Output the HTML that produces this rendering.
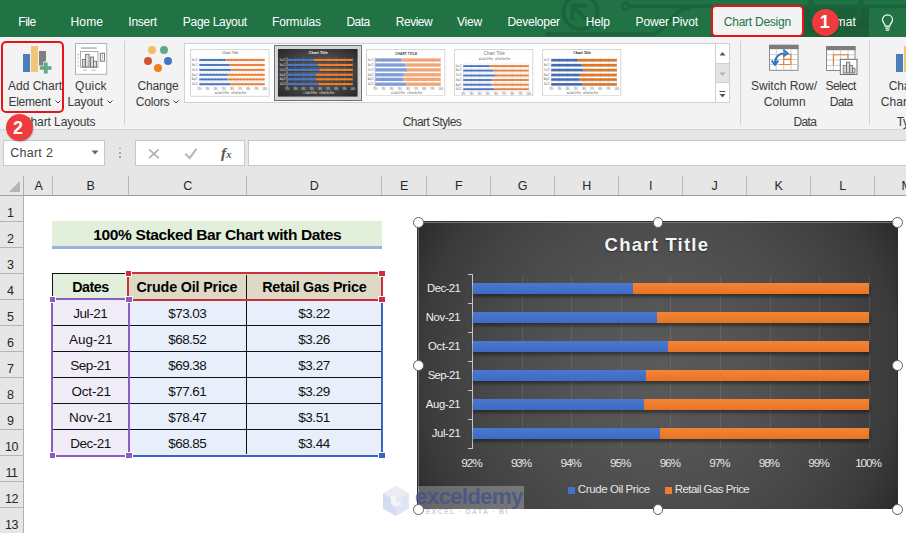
<!DOCTYPE html>
<html><head><meta charset="utf-8"><title>Excel</title>
<style>
html,body{margin:0;padding:0;}
body{width:906px;height:533px;position:relative;overflow:hidden;background:#fff;font-family:"Liberation Sans",sans-serif;}
.r{position:absolute;display:block;}
.t{position:absolute;white-space:nowrap;display:block;}
</style></head><body>
<div class="r" style="left:0px;top:0px;width:906px;height:37px;background:#217346;"></div>
<div class="r" style="left:711px;top:7px;width:158px;height:30px;background:#1b5e38;"></div>
<svg class="r" style="left:540px;top:0" width="366" height="37" viewBox="540 0 366 37" fill="none" stroke="#1a653c" stroke-width="3.800">
<circle cx="580.500" cy="12" r="17"/><path d="M572.500 20V5.500H587M573 6L590 23" stroke-width="4.200"/>
<path d="M545 34H650Q658 34 663 28L678 12Q682 8 690 8"/><circle cx="625.500" cy="6.400" r="3.300" stroke-width="3"/><path d="M629 6.400H906"/>
<circle cx="836" cy="2" r="25" stroke-width="5"/><path d="M804 24.500H869" stroke="#185a34" stroke-width="3.500"/>
</svg>
<span class="t" style="left:18.27px;top:14.14px;font-size:12px;line-height:16px;letter-spacing:-0.459px;color:#ffffff;">File</span>
<span class="t" style="left:70.56px;top:14.14px;font-size:12px;line-height:16px;letter-spacing:0.123px;color:#ffffff;">Home</span>
<span class="t" style="left:128.37px;top:14.14px;font-size:12px;line-height:16px;letter-spacing:-0.252px;color:#ffffff;">Insert</span>
<span class="t" style="left:182.85px;top:14.14px;font-size:12px;line-height:16px;letter-spacing:-0.308px;color:#ffffff;">Page Layout</span>
<span class="t" style="left:271.94px;top:14.14px;font-size:12px;line-height:16px;letter-spacing:-0.126px;color:#ffffff;">Formulas</span>
<span class="t" style="left:346.44px;top:14.14px;font-size:12px;line-height:16px;letter-spacing:-0.512px;color:#ffffff;">Data</span>
<span class="t" style="left:395.76px;top:14.14px;font-size:12px;line-height:16px;letter-spacing:-0.474px;color:#ffffff;">Review</span>
<span class="t" style="left:456.90px;top:14.14px;font-size:12px;line-height:16px;letter-spacing:-0.198px;color:#ffffff;">View</span>
<span class="t" style="left:507.38px;top:14.14px;font-size:12px;line-height:16px;letter-spacing:-0.244px;color:#ffffff;">Developer</span>
<span class="t" style="left:585.65px;top:14.14px;font-size:12px;line-height:16px;letter-spacing:-0.095px;color:#ffffff;">Help</span>
<span class="t" style="left:635.62px;top:14.14px;font-size:12px;line-height:16px;letter-spacing:-0.157px;color:#ffffff;">Power Pivot</span>
<div class="r" style="left:710.5px;top:5px;width:93.5px;height:31.5px;background:#f3f3f3;border:2px solid #e8141c;border-radius:5px;box-sizing:border-box;"></div>
<span class="t" style="left:723.87px;top:14.14px;font-size:12px;line-height:16px;letter-spacing:-0.252px;color:#217346;">Chart Design</span>
<span class="t" style="left:817.08px;top:14.14px;font-size:12px;line-height:16px;letter-spacing:0.166px;color:#ffffff;">Format</span>
<div class="r" style="left:812.400px;top:8.700px;width:27px;height:27px;box-shadow:0.5px 1px 1.5px rgba(0,0,0,.25);border-radius:50%;background:#ee3b3e;"></div>
<span class="t" style="left:819.74px;top:11.41px;font-size:18px;line-height:22px;letter-spacing:-2.511px;color:#ffffff;font-weight:bold;">1</span>
<svg class="r" style="left:881px;top:13.500px" width="13" height="17" viewBox="0 0 16 21" fill="none" stroke="#fff" stroke-width="1.500"><path d="M8 1.200C4.300 1.200 1.800 3.900 1.800 7.100C1.800 9.700 3.700 11 4.600 12.800L5.100 15H10.900L11.400 12.800C12.300 11 14.200 9.700 14.200 7.100C14.200 3.900 11.700 1.200 8 1.200Z"/><path d="M5.300 17.400H10.700M5.800 19.800H10.200"/></svg>
<div class="r" style="left:0px;top:37px;width:906px;height:93px;background:#f3f3f3;"></div>
<div class="r" style="left:0px;top:129px;width:906px;height:1px;background:#d4d4d4;"></div>
<div class="r" style="left:124px;top:41px;width:1px;height:84px;background:#d2d2d2;"></div>
<div class="r" style="left:740px;top:41px;width:1px;height:84px;background:#d2d2d2;"></div>
<div class="r" style="left:869px;top:41px;width:1px;height:84px;background:#d2d2d2;"></div>
<div class="r" style="left:0.7px;top:41.3px;width:63.5px;height:71.7px;background:transparent;border:2px solid #e8141c;border-radius:5px;box-sizing:border-box;"></div>
<div class="r" style="left:22.9px;top:54.2px;width:7.1px;height:17.5px;background:#4a7ebb;"></div>
<div class="r" style="left:31px;top:46.2px;width:6.9px;height:25.5px;background:#f0c577;"></div>
<div class="r" style="left:39.3px;top:51.2px;width:6.4px;height:14.5px;background:#7f7f7f;"></div>
<svg class="r" style="left:38px;top:61.4px" width="14" height="14" viewBox="0 0 14 14"><path d="M5.3 0.6h4.800v3.900h3.900v4.400h-3.900v4.400h-4.800v-4.400h-4.600v-4.400h4.600z" fill="#f3f3f3"/><path d="M5.800 1.400h3.900v3.800h3.800v3.500h-3.800v3.900h-3.900v-3.900h-3.900v-3.500h3.900z" fill="#5fa88a"/></svg>
<span class="t" style="left:8.00px;top:78.14px;font-size:12px;line-height:16px;letter-spacing:-0.003px;color:#3a3a3a;">Add Chart</span>
<span class="t" style="left:8.39px;top:94.14px;font-size:12px;line-height:16px;letter-spacing:-0.217px;color:#3a3a3a;">Element</span>
<svg class="r" style="left:54.7px;top:100.2px" width="6" height="4" viewBox="0 0 6 4"><path d="M0.5 0.5 L3 3 L5.5 0.5" fill="none" stroke="#444" stroke-width="1"/></svg>
<svg class="r" style="left:107.2px;top:100.2px" width="6" height="4" viewBox="0 0 6 4"><path d="M0.5 0.5 L3 3 L5.5 0.5" fill="none" stroke="#444" stroke-width="1"/></svg>
<svg class="r" style="left:173.2px;top:100.2px" width="6" height="4" viewBox="0 0 6 4"><path d="M0.5 0.5 L3 3 L5.5 0.5" fill="none" stroke="#444" stroke-width="1"/></svg>
<svg class="r" style="left:75px;top:43px" width="33" height="32" viewBox="75 43 33 32"><rect x="75.5" y="43.500" width="31.200" height="30.800" fill="#fff" stroke="#b2b2b2"/>
<rect x="81" y="47.400" width="15.700" height="1.300" fill="#a6a6a6"/><rect x="80.500" y="51.500" width="17.500" height="15.700" fill="#fff" stroke="#9a9a9a" stroke-width="0.8"/>
<g fill="#dcdcdc" stroke="#666" stroke-width="0.8"><rect x="82.300" y="59.500" width="2.900" height="7.500"/><rect x="85.600" y="54.300" width="3.500" height="12.700"/><rect x="90.400" y="57" width="3.200" height="10"/><rect x="93.600" y="61.200" width="3" height="5.800"/></g>
<rect x="100.300" y="53.200" width="4.100" height="8" fill="#fff" stroke="#666" stroke-width="0.9"/><path d="M102.350 54.800v1M102.350 56.700v1M102.350 58.600v1" stroke="#666" stroke-width="1"/>
<path d="M77.200 54.500h1.800M77.200 58.300h1.800M77.200 62h1.800M77.200 65.800h1.800" stroke="#aaa" stroke-width="0.8"/><path d="M83.200 70.200h3.800M91.500 70.200h3.800" stroke="#aaa" stroke-width="0.9"/></svg>
<span class="t" style="left:75.10px;top:78.14px;font-size:12px;line-height:16px;letter-spacing:0.205px;color:#3a3a3a;">Quick</span>
<span class="t" style="left:67.46px;top:94.14px;font-size:12px;line-height:16px;letter-spacing:-0.088px;color:#3a3a3a;">Layout</span>
<div class="r" style="left:148px;top:46px;width:8px;height:8px;border-radius:50%;background:#f0c060"></div>
<div class="r" style="left:160px;top:46px;width:8px;height:8px;border-radius:50%;background:#5fa88a"></div>
<div class="r" style="left:144px;top:57px;width:8px;height:8px;border-radius:50%;background:#d4532f"></div>
<div class="r" style="left:164px;top:57px;width:8px;height:8px;border-radius:50%;background:#3d78c2"></div>
<div class="r" style="left:154px;top:63.5px;width:8px;height:8px;border-radius:50%;background:#f08020"></div>
<span class="t" style="left:137.43px;top:78.14px;font-size:12px;line-height:16px;letter-spacing:-0.139px;color:#3a3a3a;">Change</span>
<span class="t" style="left:135.63px;top:94.14px;font-size:12px;line-height:16px;letter-spacing:-0.146px;color:#3a3a3a;">Colors</span>
<span class="t" style="left:21.95px;top:113.64px;font-size:12px;line-height:16px;letter-spacing:-0.093px;color:#3a3a3a;">Chart Layouts</span>
<span class="t" style="left:402.71px;top:113.64px;font-size:12px;line-height:16px;letter-spacing:-0.571px;color:#3a3a3a;">Chart Styles</span>
<span class="t" style="left:751.00px;top:78.14px;font-size:12px;line-height:16px;letter-spacing:-0.002px;color:#3a3a3a;">Switch Row/</span>
<span class="t" style="left:763.75px;top:94.14px;font-size:12px;line-height:16px;letter-spacing:0.109px;color:#3a3a3a;">Column</span>
<span class="t" style="left:825.45px;top:78.14px;font-size:12px;line-height:16px;letter-spacing:-0.509px;color:#3a3a3a;">Select</span>
<span class="t" style="left:829.71px;top:94.14px;font-size:12px;line-height:16px;letter-spacing:-0.587px;color:#3a3a3a;">Data</span>
<span class="t" style="left:793.41px;top:113.64px;font-size:12px;line-height:16px;letter-spacing:-0.587px;color:#3a3a3a;">Data</span>
<span class="t" style="left:888.64px;top:78.14px;font-size:12px;line-height:16px;letter-spacing:-0.122px;color:#3a3a3a;">Change</span>
<span class="t" style="left:880.74px;top:94.14px;font-size:12px;line-height:16px;letter-spacing:0.082px;color:#3a3a3a;">Chart Type</span>
<span class="t" style="left:896.75px;top:113.64px;font-size:12px;line-height:16px;letter-spacing:-0.504px;color:#3a3a3a;">Type</span>
<div class="r" style="left:896.3px;top:54px;width:6.9px;height:17.8px;background:#4a7ebb;"></div>
<div class="r" style="left:904px;top:45.7px;width:4px;height:26px;background:#f0c577;"></div>
<svg class="r" style="left:768px;top:44px" width="32" height="28" viewBox="768 44 32 28"><rect x="769.500" y="45.300" width="28.500" height="25" fill="#fff" stroke="#8a8a8a"/><rect x="769" y="44.800" width="29.500" height="4.400" fill="#7d7d7d"/>
<path d="M770 54.500h28M770 59.500h28M770 64.500h28M776.300 49v21M783.700 49v21M791 49v21" stroke="#c8c8c8" stroke-width="0.9"/>
<path d="M779.300 64.500h11.600v-10.200h-7.200v10.200M783.700 59.400h7.200" stroke="#ed7d31" stroke-width="1.100" fill="none"/>
<path d="M775 63.500C775 57 779 53.200 785.500 53.200" stroke="#2f75c5" stroke-width="2.100" fill="none"/><path d="M783.300 49.800L787.600 53.200L783.300 56.600" stroke="#2f75c5" stroke-width="1.900" fill="none"/><path d="M771.600 60.600L775 65L778.400 60.600" stroke="#2f75c5" stroke-width="1.900" fill="none"/></svg>
<svg class="r" style="left:825px;top:44px" width="34" height="32" viewBox="825 44 34 32"><rect x="826.500" y="46.500" width="28.500" height="24" fill="#fff" stroke="#8a8a8a"/><rect x="826" y="46" width="29.500" height="4.200" fill="#7d7d7d"/>
<path d="M827 54.800h28M827 60h28M827 65.500h28M833.400 50v20M840.600 50v20M848 50v20" stroke="#c8c8c8" stroke-width="0.9"/>
<path d="M833.400 65.500v-10.700h14.600v4" stroke="#ed7d31" stroke-width="1.100" fill="none"/>
<rect x="840.300" y="59.300" width="16.700" height="15.200" fill="#fff" stroke="#6e6e6e" stroke-width="1"/>
<g fill="#d6d6d6" stroke="#666" stroke-width="0.8"><rect x="843.200" y="65.500" width="3.200" height="7.500"/><rect x="846.400" y="62.200" width="3.400" height="10.800"/><rect x="849.800" y="65.500" width="2.800" height="7.500"/><rect x="852.600" y="68.200" width="2.400" height="4.800"/></g></svg>
<div class="r" style="left:184px;top:43px;width:546px;height:60px;background:#ffffff;border:1px solid #d0d0d0;box-sizing:border-box;"></div>
<div class="r" style="left:715px;top:43px;width:15px;height:60px;background:#ffffff;border:1px solid #d0d0d0;box-sizing:border-box;"></div>
<div class="r" style="left:716px;top:63px;width:13px;height:20px;background:#e4e4e4;border-top:1px solid #d0d0d0;border-bottom:1px solid #d0d0d0;box-sizing:border-box;"></div>
<svg class="r" style="left:715px;top:43px" width="15" height="60" viewBox="0 0 15 60"><path d="M4.500 12.500l3-3.500l3 3.500z" fill="#555"/><path d="M4.500 29.500l3 3.500l3-3.500z" fill="#b0b0b0"/><path d="M4.500 48.500h6" stroke="#555"/><path d="M4.500 51l3 3.500l3-3.500z" fill="#555"/></svg>
<svg class="r" style="left:190.3px;top:48.8px" width="79.6" height="47.8" viewBox="0 0 79.6 47.8" font-family="Liberation Sans, sans-serif"><rect x="0.5" y="0.5" width="78.6" height="46.8" fill="#fff" stroke="#d6d6d6"/><defs><pattern id="hz" width="3.2" height="3.2" patternUnits="userSpaceOnUse"><path d="M-0.8 -0.8L4 4M-0.8 2.4L0.8 4M2.4 -0.8L4 0.8" stroke="#b4b4b4" stroke-width="0.5"/></pattern></defs><text x="40.199999999999996" y="4.90" font-size="3.6" text-anchor="middle" fill="#444" >Chart Title</text><rect x="9.3" y="8.55" width="65.4" height="29.100000000000005" fill="url(#hz)"/><rect x="9.3" y="10.05" width="26.49" height="1.9" fill="#4472c4"/><rect x="35.79" y="10.05" width="38.91" height="1.9" fill="#ed7d31"/><text x="7.6" y="11.90" font-size="2.8" text-anchor="end" textLength="5.8" lengthAdjust="spacingAndGlyphs" fill="#4a4a4a">Dec-21</text><rect x="9.3" y="15.05" width="30.41" height="1.9" fill="#4472c4"/><rect x="39.71" y="15.05" width="34.99" height="1.9" fill="#ed7d31"/><text x="7.6" y="16.90" font-size="2.8" text-anchor="end" textLength="5.8" lengthAdjust="spacingAndGlyphs" fill="#4a4a4a">Nov-21</text><rect x="9.3" y="19.95" width="32.18" height="1.9" fill="#4472c4"/><rect x="41.48" y="19.95" width="33.22" height="1.9" fill="#ed7d31"/><text x="7.6" y="21.80" font-size="2.8" text-anchor="end" textLength="5.8" lengthAdjust="spacingAndGlyphs" fill="#4a4a4a">Oct-21</text><rect x="9.3" y="24.85" width="28.58" height="1.9" fill="#4472c4"/><rect x="37.88" y="24.85" width="36.82" height="1.9" fill="#ed7d31"/><text x="7.6" y="26.70" font-size="2.8" text-anchor="end" textLength="5.8" lengthAdjust="spacingAndGlyphs" fill="#4a4a4a">Sep-21</text><rect x="9.3" y="29.45" width="28.25" height="1.9" fill="#4472c4"/><rect x="37.55" y="29.45" width="37.15" height="1.9" fill="#ed7d31"/><text x="7.6" y="31.30" font-size="2.8" text-anchor="end" textLength="5.8" lengthAdjust="spacingAndGlyphs" fill="#4a4a4a">Aug-21</text><rect x="9.3" y="34.25" width="30.87" height="1.9" fill="#4472c4"/><rect x="40.17" y="34.25" width="34.53" height="1.9" fill="#ed7d31"/><text x="7.6" y="36.10" font-size="2.8" text-anchor="end" textLength="5.8" lengthAdjust="spacingAndGlyphs" fill="#4a4a4a">Jul-21</text><text x="9.30" y="40.85" font-size="2.7" text-anchor="middle" textLength="3.6" lengthAdjust="spacingAndGlyphs" fill="#4a4a4a">92%</text><text x="17.48" y="40.85" font-size="2.7" text-anchor="middle" textLength="3.6" lengthAdjust="spacingAndGlyphs" fill="#4a4a4a">93%</text><text x="25.65" y="40.85" font-size="2.7" text-anchor="middle" textLength="3.6" lengthAdjust="spacingAndGlyphs" fill="#4a4a4a">94%</text><text x="33.83" y="40.85" font-size="2.7" text-anchor="middle" textLength="3.6" lengthAdjust="spacingAndGlyphs" fill="#4a4a4a">95%</text><text x="42.00" y="40.85" font-size="2.7" text-anchor="middle" textLength="3.6" lengthAdjust="spacingAndGlyphs" fill="#4a4a4a">96%</text><text x="50.17" y="40.85" font-size="2.7" text-anchor="middle" textLength="3.6" lengthAdjust="spacingAndGlyphs" fill="#4a4a4a">97%</text><text x="58.35" y="40.85" font-size="2.7" text-anchor="middle" textLength="3.6" lengthAdjust="spacingAndGlyphs" fill="#4a4a4a">98%</text><text x="66.53" y="40.85" font-size="2.7" text-anchor="middle" textLength="3.6" lengthAdjust="spacingAndGlyphs" fill="#4a4a4a">99%</text><text x="74.70" y="40.85" font-size="2.7" text-anchor="middle" textLength="4.6" lengthAdjust="spacingAndGlyphs" fill="#4a4a4a">100%</text><rect x="25.2" y="43.4" width="1.4" height="1.4" fill="#4472c4"/><text x="27" y="44.95" font-size="2.7" textLength="12" lengthAdjust="spacingAndGlyphs" fill="#4a4a4a">Crude Oil Price</text><rect x="41.3" y="43.4" width="1.4" height="1.4" fill="#ed7d31"/><text x="43.1" y="44.95" font-size="2.7" textLength="13" lengthAdjust="spacingAndGlyphs" fill="#4a4a4a">Retail Gas Price</text></svg>
<div class="r" style="left:274px;top:45px;width:88px;height:56px;background:#d2d2d2;border:1px solid #6e6e6e;box-sizing:border-box;"></div>
<div class="r" style="left:275px;top:46px;width:86px;height:54px;background:transparent;border:1px solid #dcdcdc;box-sizing:border-box;"></div>
<svg class="r" style="left:278.2px;top:49.2px" width="79.6" height="47.6" viewBox="0 0 79.6 47.6" font-family="Liberation Sans, sans-serif"><defs><radialGradient id="tg" cx="50%" cy="50%" r="65%"><stop offset="0" stop-color="#5a5a5a"/><stop offset=".6" stop-color="#474747"/><stop offset="1" stop-color="#2b2b2b"/></radialGradient></defs><rect width="79.6" height="47.6" fill="url(#tg)"/><text x="40.3" y="5.00" font-size="3.9" text-anchor="middle" fill="#f4f4f4" font-weight="bold">Chart Title</text><path d="M9.30 8.55V37.650000000000006" stroke="#777" stroke-width="0.4"/><path d="M17.48 8.55V37.650000000000006" stroke="#777" stroke-width="0.4"/><path d="M25.65 8.55V37.650000000000006" stroke="#777" stroke-width="0.4"/><path d="M33.83 8.55V37.650000000000006" stroke="#777" stroke-width="0.4"/><path d="M42.00 8.55V37.650000000000006" stroke="#777" stroke-width="0.4"/><path d="M50.17 8.55V37.650000000000006" stroke="#777" stroke-width="0.4"/><path d="M58.35 8.55V37.650000000000006" stroke="#777" stroke-width="0.4"/><path d="M66.53 8.55V37.650000000000006" stroke="#777" stroke-width="0.4"/><path d="M74.70 8.55V37.650000000000006" stroke="#777" stroke-width="0.4"/><path d="M9.0 8.55V37.650000000000006" stroke="#ddd" stroke-width="0.5"/><rect x="9.3" y="10.60" width="65.4" height="2.2" fill="#000" opacity=".3"/><rect x="9.3" y="9.90" width="26.49" height="2.2" fill="#4a78cf"/><rect x="35.79" y="9.90" width="38.91" height="2.2" fill="#f07f2e"/><text x="7.6" y="11.90" font-size="2.8" text-anchor="end" textLength="5.8" lengthAdjust="spacingAndGlyphs" fill="#f0f0f0">Dec-21</text><rect x="9.3" y="15.60" width="65.4" height="2.2" fill="#000" opacity=".3"/><rect x="9.3" y="14.90" width="30.41" height="2.2" fill="#4a78cf"/><rect x="39.71" y="14.90" width="34.99" height="2.2" fill="#f07f2e"/><text x="7.6" y="16.90" font-size="2.8" text-anchor="end" textLength="5.8" lengthAdjust="spacingAndGlyphs" fill="#f0f0f0">Nov-21</text><rect x="9.3" y="20.50" width="65.4" height="2.2" fill="#000" opacity=".3"/><rect x="9.3" y="19.80" width="32.18" height="2.2" fill="#4a78cf"/><rect x="41.48" y="19.80" width="33.22" height="2.2" fill="#f07f2e"/><text x="7.6" y="21.80" font-size="2.8" text-anchor="end" textLength="5.8" lengthAdjust="spacingAndGlyphs" fill="#f0f0f0">Oct-21</text><rect x="9.3" y="25.40" width="65.4" height="2.2" fill="#000" opacity=".3"/><rect x="9.3" y="24.70" width="28.58" height="2.2" fill="#4a78cf"/><rect x="37.88" y="24.70" width="36.82" height="2.2" fill="#f07f2e"/><text x="7.6" y="26.70" font-size="2.8" text-anchor="end" textLength="5.8" lengthAdjust="spacingAndGlyphs" fill="#f0f0f0">Sep-21</text><rect x="9.3" y="30.00" width="65.4" height="2.2" fill="#000" opacity=".3"/><rect x="9.3" y="29.30" width="28.25" height="2.2" fill="#4a78cf"/><rect x="37.55" y="29.30" width="37.15" height="2.2" fill="#f07f2e"/><text x="7.6" y="31.30" font-size="2.8" text-anchor="end" textLength="5.8" lengthAdjust="spacingAndGlyphs" fill="#f0f0f0">Aug-21</text><rect x="9.3" y="34.80" width="65.4" height="2.2" fill="#000" opacity=".3"/><rect x="9.3" y="34.10" width="30.87" height="2.2" fill="#4a78cf"/><rect x="40.17" y="34.10" width="34.53" height="2.2" fill="#f07f2e"/><text x="7.6" y="36.10" font-size="2.8" text-anchor="end" textLength="5.8" lengthAdjust="spacingAndGlyphs" fill="#f0f0f0">Jul-21</text><text x="9.30" y="40.85" font-size="2.7" text-anchor="middle" textLength="3.6" lengthAdjust="spacingAndGlyphs" fill="#f0f0f0">92%</text><text x="17.48" y="40.85" font-size="2.7" text-anchor="middle" textLength="3.6" lengthAdjust="spacingAndGlyphs" fill="#f0f0f0">93%</text><text x="25.65" y="40.85" font-size="2.7" text-anchor="middle" textLength="3.6" lengthAdjust="spacingAndGlyphs" fill="#f0f0f0">94%</text><text x="33.83" y="40.85" font-size="2.7" text-anchor="middle" textLength="3.6" lengthAdjust="spacingAndGlyphs" fill="#f0f0f0">95%</text><text x="42.00" y="40.85" font-size="2.7" text-anchor="middle" textLength="3.6" lengthAdjust="spacingAndGlyphs" fill="#f0f0f0">96%</text><text x="50.17" y="40.85" font-size="2.7" text-anchor="middle" textLength="3.6" lengthAdjust="spacingAndGlyphs" fill="#f0f0f0">97%</text><text x="58.35" y="40.85" font-size="2.7" text-anchor="middle" textLength="3.6" lengthAdjust="spacingAndGlyphs" fill="#f0f0f0">98%</text><text x="66.53" y="40.85" font-size="2.7" text-anchor="middle" textLength="3.6" lengthAdjust="spacingAndGlyphs" fill="#f0f0f0">99%</text><text x="74.70" y="40.85" font-size="2.7" text-anchor="middle" textLength="4.6" lengthAdjust="spacingAndGlyphs" fill="#f0f0f0">100%</text><rect x="25.2" y="43.4" width="1.4" height="1.4" fill="#4a78cf"/><text x="27" y="44.95" font-size="2.7" textLength="12" lengthAdjust="spacingAndGlyphs" fill="#f0f0f0">Crude Oil Price</text><rect x="41.3" y="43.4" width="1.4" height="1.4" fill="#f07f2e"/><text x="43.1" y="44.95" font-size="2.7" textLength="13" lengthAdjust="spacingAndGlyphs" fill="#f0f0f0">Retail Gas Price</text></svg>
<svg class="r" style="left:366.3px;top:49.2px" width="79.3" height="47.3" viewBox="0 0 79.3 47.3" font-family="Liberation Sans, sans-serif"><rect x="0.5" y="0.5" width="78.3" height="46.3" fill="#fff" stroke="#d6d6d6"/><text x="40.15" y="5.62" font-size="3.4" text-anchor="middle" fill="#444" font-weight="bold">CHART TITLE</text><path d="M9.30 8.55V37.650000000000006" stroke="#dcdcdc" stroke-width="0.4"/><path d="M17.48 8.55V37.650000000000006" stroke="#dcdcdc" stroke-width="0.4"/><path d="M25.65 8.55V37.650000000000006" stroke="#dcdcdc" stroke-width="0.4"/><path d="M33.83 8.55V37.650000000000006" stroke="#dcdcdc" stroke-width="0.4"/><path d="M42.00 8.55V37.650000000000006" stroke="#dcdcdc" stroke-width="0.4"/><path d="M50.17 8.55V37.650000000000006" stroke="#dcdcdc" stroke-width="0.4"/><path d="M58.35 8.55V37.650000000000006" stroke="#dcdcdc" stroke-width="0.4"/><path d="M66.53 8.55V37.650000000000006" stroke="#dcdcdc" stroke-width="0.4"/><path d="M74.70 8.55V37.650000000000006" stroke="#dcdcdc" stroke-width="0.4"/><path d="M9.0 8.55V37.650000000000006" stroke="#aaa" stroke-width="0.5"/><rect x="9.3" y="9.35" width="26.49" height="3.3" fill="#7f9dd6"/><rect x="35.79" y="9.35" width="38.91" height="3.3" fill="#f2a677"/><text x="7.6" y="11.90" font-size="2.8" text-anchor="end" textLength="5.8" lengthAdjust="spacingAndGlyphs" fill="#4a4a4a">Dec-21</text><rect x="9.3" y="14.35" width="30.41" height="3.3" fill="#7f9dd6"/><rect x="39.71" y="14.35" width="34.99" height="3.3" fill="#f2a677"/><text x="7.6" y="16.90" font-size="2.8" text-anchor="end" textLength="5.8" lengthAdjust="spacingAndGlyphs" fill="#4a4a4a">Nov-21</text><rect x="9.3" y="19.25" width="32.18" height="3.3" fill="#7f9dd6"/><rect x="41.48" y="19.25" width="33.22" height="3.3" fill="#f2a677"/><text x="7.6" y="21.80" font-size="2.8" text-anchor="end" textLength="5.8" lengthAdjust="spacingAndGlyphs" fill="#4a4a4a">Oct-21</text><rect x="9.3" y="24.15" width="28.58" height="3.3" fill="#7f9dd6"/><rect x="37.88" y="24.15" width="36.82" height="3.3" fill="#f2a677"/><text x="7.6" y="26.70" font-size="2.8" text-anchor="end" textLength="5.8" lengthAdjust="spacingAndGlyphs" fill="#4a4a4a">Sep-21</text><rect x="9.3" y="28.75" width="28.25" height="3.3" fill="#7f9dd6"/><rect x="37.55" y="28.75" width="37.15" height="3.3" fill="#f2a677"/><text x="7.6" y="31.30" font-size="2.8" text-anchor="end" textLength="5.8" lengthAdjust="spacingAndGlyphs" fill="#4a4a4a">Aug-21</text><rect x="9.3" y="33.55" width="30.87" height="3.3" fill="#7f9dd6"/><rect x="40.17" y="33.55" width="34.53" height="3.3" fill="#f2a677"/><text x="7.6" y="36.10" font-size="2.8" text-anchor="end" textLength="5.8" lengthAdjust="spacingAndGlyphs" fill="#4a4a4a">Jul-21</text><text x="9.30" y="40.85" font-size="2.7" text-anchor="middle" textLength="3.6" lengthAdjust="spacingAndGlyphs" fill="#4a4a4a">92%</text><text x="17.48" y="40.85" font-size="2.7" text-anchor="middle" textLength="3.6" lengthAdjust="spacingAndGlyphs" fill="#4a4a4a">93%</text><text x="25.65" y="40.85" font-size="2.7" text-anchor="middle" textLength="3.6" lengthAdjust="spacingAndGlyphs" fill="#4a4a4a">94%</text><text x="33.83" y="40.85" font-size="2.7" text-anchor="middle" textLength="3.6" lengthAdjust="spacingAndGlyphs" fill="#4a4a4a">95%</text><text x="42.00" y="40.85" font-size="2.7" text-anchor="middle" textLength="3.6" lengthAdjust="spacingAndGlyphs" fill="#4a4a4a">96%</text><text x="50.17" y="40.85" font-size="2.7" text-anchor="middle" textLength="3.6" lengthAdjust="spacingAndGlyphs" fill="#4a4a4a">97%</text><text x="58.35" y="40.85" font-size="2.7" text-anchor="middle" textLength="3.6" lengthAdjust="spacingAndGlyphs" fill="#4a4a4a">98%</text><text x="66.53" y="40.85" font-size="2.7" text-anchor="middle" textLength="3.6" lengthAdjust="spacingAndGlyphs" fill="#4a4a4a">99%</text><text x="74.70" y="40.85" font-size="2.7" text-anchor="middle" textLength="4.6" lengthAdjust="spacingAndGlyphs" fill="#4a4a4a">100%</text><rect x="25.2" y="43.4" width="1.4" height="1.4" fill="#7f9dd6"/><text x="27" y="44.95" font-size="2.7" textLength="12" lengthAdjust="spacingAndGlyphs" fill="#4a4a4a">Crude Oil Price</text><rect x="41.3" y="43.4" width="1.4" height="1.4" fill="#f2a677"/><text x="43.1" y="44.95" font-size="2.7" textLength="13" lengthAdjust="spacingAndGlyphs" fill="#4a4a4a">Retail Gas Price</text></svg>
<svg class="r" style="left:454.3px;top:49.2px" width="79.3" height="47.3" viewBox="0 0 79.3 47.3" font-family="Liberation Sans, sans-serif"><rect x="0.5" y="0.5" width="78.3" height="46.3" fill="#fff" stroke="#d6d6d6"/><text x="40.15" y="5.89" font-size="4.7" text-anchor="middle" fill="#777" >Chart Title</text><rect x="9.3" y="14.650000000000002" width="65.4" height="28.000000000000004" fill="#e9e9e9"/><path d="M10.94 14.650000000000002V42.650000000000006" stroke="#fff" stroke-width="0.5"/><path d="M12.57 14.650000000000002V42.650000000000006" stroke="#fff" stroke-width="0.5"/><path d="M14.21 14.650000000000002V42.650000000000006" stroke="#fff" stroke-width="0.5"/><path d="M15.84 14.650000000000002V42.650000000000006" stroke="#fff" stroke-width="0.5"/><path d="M17.48 14.650000000000002V42.650000000000006" stroke="#fff" stroke-width="0.5"/><path d="M19.11 14.650000000000002V42.650000000000006" stroke="#fff" stroke-width="0.5"/><path d="M20.75 14.650000000000002V42.650000000000006" stroke="#fff" stroke-width="0.5"/><path d="M22.38 14.650000000000002V42.650000000000006" stroke="#fff" stroke-width="0.5"/><path d="M24.02 14.650000000000002V42.650000000000006" stroke="#fff" stroke-width="0.5"/><path d="M25.65 14.650000000000002V42.650000000000006" stroke="#fff" stroke-width="0.5"/><path d="M27.29 14.650000000000002V42.650000000000006" stroke="#fff" stroke-width="0.5"/><path d="M28.92 14.650000000000002V42.650000000000006" stroke="#fff" stroke-width="0.5"/><path d="M30.56 14.650000000000002V42.650000000000006" stroke="#fff" stroke-width="0.5"/><path d="M32.19 14.650000000000002V42.650000000000006" stroke="#fff" stroke-width="0.5"/><path d="M33.83 14.650000000000002V42.650000000000006" stroke="#fff" stroke-width="0.5"/><path d="M35.46 14.650000000000002V42.650000000000006" stroke="#fff" stroke-width="0.5"/><path d="M37.10 14.650000000000002V42.650000000000006" stroke="#fff" stroke-width="0.5"/><path d="M38.73 14.650000000000002V42.650000000000006" stroke="#fff" stroke-width="0.5"/><path d="M40.37 14.650000000000002V42.650000000000006" stroke="#fff" stroke-width="0.5"/><path d="M42.00 14.650000000000002V42.650000000000006" stroke="#fff" stroke-width="0.5"/><path d="M43.64 14.650000000000002V42.650000000000006" stroke="#fff" stroke-width="0.5"/><path d="M45.27 14.650000000000002V42.650000000000006" stroke="#fff" stroke-width="0.5"/><path d="M46.91 14.650000000000002V42.650000000000006" stroke="#fff" stroke-width="0.5"/><path d="M48.54 14.650000000000002V42.650000000000006" stroke="#fff" stroke-width="0.5"/><path d="M50.18 14.650000000000002V42.650000000000006" stroke="#fff" stroke-width="0.5"/><path d="M51.81 14.650000000000002V42.650000000000006" stroke="#fff" stroke-width="0.5"/><path d="M53.45 14.650000000000002V42.650000000000006" stroke="#fff" stroke-width="0.5"/><path d="M55.08 14.650000000000002V42.650000000000006" stroke="#fff" stroke-width="0.5"/><path d="M56.72 14.650000000000002V42.650000000000006" stroke="#fff" stroke-width="0.5"/><path d="M58.35 14.650000000000002V42.650000000000006" stroke="#fff" stroke-width="0.5"/><path d="M59.98 14.650000000000002V42.650000000000006" stroke="#fff" stroke-width="0.5"/><path d="M61.62 14.650000000000002V42.650000000000006" stroke="#fff" stroke-width="0.5"/><path d="M63.26 14.650000000000002V42.650000000000006" stroke="#fff" stroke-width="0.5"/><path d="M64.89 14.650000000000002V42.650000000000006" stroke="#fff" stroke-width="0.5"/><path d="M66.53 14.650000000000002V42.650000000000006" stroke="#fff" stroke-width="0.5"/><path d="M68.16 14.650000000000002V42.650000000000006" stroke="#fff" stroke-width="0.5"/><path d="M69.80 14.650000000000002V42.650000000000006" stroke="#fff" stroke-width="0.5"/><path d="M71.43 14.650000000000002V42.650000000000006" stroke="#fff" stroke-width="0.5"/><path d="M73.07 14.650000000000002V42.650000000000006" stroke="#fff" stroke-width="0.5"/><rect x="9.3" y="15.40" width="65.4" height="0.6" fill="#fff"/><rect x="9.3" y="18.20" width="65.4" height="0.6" fill="#fff"/><rect x="9.3" y="19.90" width="65.4" height="0.6" fill="#fff"/><rect x="9.3" y="22.70" width="65.4" height="0.6" fill="#fff"/><rect x="9.3" y="24.80" width="65.4" height="0.6" fill="#fff"/><rect x="9.3" y="27.60" width="65.4" height="0.6" fill="#fff"/><rect x="9.3" y="29.30" width="65.4" height="0.6" fill="#fff"/><rect x="9.3" y="32.10" width="65.4" height="0.6" fill="#fff"/><rect x="9.3" y="34.00" width="65.4" height="0.6" fill="#fff"/><rect x="9.3" y="36.80" width="65.4" height="0.6" fill="#fff"/><rect x="9.3" y="38.50" width="65.4" height="0.6" fill="#fff"/><rect x="9.3" y="41.30" width="65.4" height="0.6" fill="#fff"/><path d="M9.30 14.650000000000002V42.650000000000006" stroke="#d0d0d0" stroke-width="0.4"/><path d="M17.48 14.650000000000002V42.650000000000006" stroke="#d0d0d0" stroke-width="0.4"/><path d="M25.65 14.650000000000002V42.650000000000006" stroke="#d0d0d0" stroke-width="0.4"/><path d="M33.83 14.650000000000002V42.650000000000006" stroke="#d0d0d0" stroke-width="0.4"/><path d="M42.00 14.650000000000002V42.650000000000006" stroke="#d0d0d0" stroke-width="0.4"/><path d="M50.17 14.650000000000002V42.650000000000006" stroke="#d0d0d0" stroke-width="0.4"/><path d="M58.35 14.650000000000002V42.650000000000006" stroke="#d0d0d0" stroke-width="0.4"/><path d="M66.53 14.650000000000002V42.650000000000006" stroke="#d0d0d0" stroke-width="0.4"/><path d="M74.70 14.650000000000002V42.650000000000006" stroke="#d0d0d0" stroke-width="0.4"/><rect x="9.3" y="16.20" width="26.49" height="1.8" fill="#4472c4"/><rect x="35.79" y="16.20" width="38.91" height="1.8" fill="#ed7d31"/><text x="7.6" y="18.00" font-size="2.8" text-anchor="end" textLength="5.8" lengthAdjust="spacingAndGlyphs" fill="#4a4a4a">Dec-21</text><rect x="9.3" y="20.70" width="30.41" height="1.8" fill="#4472c4"/><rect x="39.71" y="20.70" width="34.99" height="1.8" fill="#ed7d31"/><text x="7.6" y="22.50" font-size="2.8" text-anchor="end" textLength="5.8" lengthAdjust="spacingAndGlyphs" fill="#4a4a4a">Nov-21</text><rect x="9.3" y="25.60" width="32.18" height="1.8" fill="#4472c4"/><rect x="41.48" y="25.60" width="33.22" height="1.8" fill="#ed7d31"/><text x="7.6" y="27.40" font-size="2.8" text-anchor="end" textLength="5.8" lengthAdjust="spacingAndGlyphs" fill="#4a4a4a">Oct-21</text><rect x="9.3" y="30.10" width="28.58" height="1.8" fill="#4472c4"/><rect x="37.88" y="30.10" width="36.82" height="1.8" fill="#ed7d31"/><text x="7.6" y="31.90" font-size="2.8" text-anchor="end" textLength="5.8" lengthAdjust="spacingAndGlyphs" fill="#4a4a4a">Sep-21</text><rect x="9.3" y="34.80" width="28.25" height="1.8" fill="#4472c4"/><rect x="37.55" y="34.80" width="37.15" height="1.8" fill="#ed7d31"/><text x="7.6" y="36.60" font-size="2.8" text-anchor="end" textLength="5.8" lengthAdjust="spacingAndGlyphs" fill="#4a4a4a">Aug-21</text><rect x="9.3" y="39.30" width="30.87" height="1.8" fill="#4472c4"/><rect x="40.17" y="39.30" width="34.53" height="1.8" fill="#ed7d31"/><text x="7.6" y="41.10" font-size="2.8" text-anchor="end" textLength="5.8" lengthAdjust="spacingAndGlyphs" fill="#4a4a4a">Jul-21</text><text x="9.30" y="45.85" font-size="2.7" text-anchor="middle" textLength="3.6" lengthAdjust="spacingAndGlyphs" fill="#4a4a4a">92%</text><text x="17.48" y="45.85" font-size="2.7" text-anchor="middle" textLength="3.6" lengthAdjust="spacingAndGlyphs" fill="#4a4a4a">93%</text><text x="25.65" y="45.85" font-size="2.7" text-anchor="middle" textLength="3.6" lengthAdjust="spacingAndGlyphs" fill="#4a4a4a">94%</text><text x="33.83" y="45.85" font-size="2.7" text-anchor="middle" textLength="3.6" lengthAdjust="spacingAndGlyphs" fill="#4a4a4a">95%</text><text x="42.00" y="45.85" font-size="2.7" text-anchor="middle" textLength="3.6" lengthAdjust="spacingAndGlyphs" fill="#4a4a4a">96%</text><text x="50.17" y="45.85" font-size="2.7" text-anchor="middle" textLength="3.6" lengthAdjust="spacingAndGlyphs" fill="#4a4a4a">97%</text><text x="58.35" y="45.85" font-size="2.7" text-anchor="middle" textLength="3.6" lengthAdjust="spacingAndGlyphs" fill="#4a4a4a">98%</text><text x="66.53" y="45.85" font-size="2.7" text-anchor="middle" textLength="3.6" lengthAdjust="spacingAndGlyphs" fill="#4a4a4a">99%</text><text x="74.70" y="45.85" font-size="2.7" text-anchor="middle" textLength="4.6" lengthAdjust="spacingAndGlyphs" fill="#4a4a4a">100%</text><rect x="25.2" y="9.4" width="1.4" height="1.4" fill="#4472c4"/><text x="27" y="10.95" font-size="2.7" textLength="12" lengthAdjust="spacingAndGlyphs" fill="#4a4a4a">Crude Oil Price</text><rect x="41.3" y="9.4" width="1.4" height="1.4" fill="#ed7d31"/><text x="43.1" y="10.95" font-size="2.7" textLength="13" lengthAdjust="spacingAndGlyphs" fill="#4a4a4a">Retail Gas Price</text></svg>
<svg class="r" style="left:542.3px;top:49.2px" width="79.3" height="47.3" viewBox="0 0 79.3 47.3" font-family="Liberation Sans, sans-serif"><rect x="0.5" y="0.5" width="78.3" height="46.3" fill="#fff" stroke="#d6d6d6"/><text x="40.15" y="4.97" font-size="3.8" text-anchor="middle" fill="#222" font-weight="bold" font-family="Liberation Serif, serif">Chart Title</text><path d="M9.30 8.55V37.650000000000006" stroke="#d4d4d4" stroke-width="0.4"/><path d="M17.48 8.55V37.650000000000006" stroke="#d4d4d4" stroke-width="0.4"/><path d="M25.65 8.55V37.650000000000006" stroke="#d4d4d4" stroke-width="0.4"/><path d="M33.83 8.55V37.650000000000006" stroke="#d4d4d4" stroke-width="0.4"/><path d="M42.00 8.55V37.650000000000006" stroke="#d4d4d4" stroke-width="0.4"/><path d="M50.17 8.55V37.650000000000006" stroke="#d4d4d4" stroke-width="0.4"/><path d="M58.35 8.55V37.650000000000006" stroke="#d4d4d4" stroke-width="0.4"/><path d="M66.53 8.55V37.650000000000006" stroke="#d4d4d4" stroke-width="0.4"/><path d="M74.70 8.55V37.650000000000006" stroke="#d4d4d4" stroke-width="0.4"/><rect x="9.3" y="10.55" width="65.4" height="2.3" fill="#000" opacity=".3"/><rect x="9.3" y="9.85" width="26.49" height="2.3" fill="#3f6cc0"/><rect x="35.79" y="9.85" width="38.91" height="2.3" fill="#e8731f"/><text x="7.6" y="11.90" font-size="2.8" text-anchor="end" textLength="5.8" lengthAdjust="spacingAndGlyphs" fill="#4a4a4a">Dec-21</text><rect x="9.3" y="15.55" width="65.4" height="2.3" fill="#000" opacity=".3"/><rect x="9.3" y="14.85" width="30.41" height="2.3" fill="#3f6cc0"/><rect x="39.71" y="14.85" width="34.99" height="2.3" fill="#e8731f"/><text x="7.6" y="16.90" font-size="2.8" text-anchor="end" textLength="5.8" lengthAdjust="spacingAndGlyphs" fill="#4a4a4a">Nov-21</text><rect x="9.3" y="20.45" width="65.4" height="2.3" fill="#000" opacity=".3"/><rect x="9.3" y="19.75" width="32.18" height="2.3" fill="#3f6cc0"/><rect x="41.48" y="19.75" width="33.22" height="2.3" fill="#e8731f"/><text x="7.6" y="21.80" font-size="2.8" text-anchor="end" textLength="5.8" lengthAdjust="spacingAndGlyphs" fill="#4a4a4a">Oct-21</text><rect x="9.3" y="25.35" width="65.4" height="2.3" fill="#000" opacity=".3"/><rect x="9.3" y="24.65" width="28.58" height="2.3" fill="#3f6cc0"/><rect x="37.88" y="24.65" width="36.82" height="2.3" fill="#e8731f"/><text x="7.6" y="26.70" font-size="2.8" text-anchor="end" textLength="5.8" lengthAdjust="spacingAndGlyphs" fill="#4a4a4a">Sep-21</text><rect x="9.3" y="29.95" width="65.4" height="2.3" fill="#000" opacity=".3"/><rect x="9.3" y="29.25" width="28.25" height="2.3" fill="#3f6cc0"/><rect x="37.55" y="29.25" width="37.15" height="2.3" fill="#e8731f"/><text x="7.6" y="31.30" font-size="2.8" text-anchor="end" textLength="5.8" lengthAdjust="spacingAndGlyphs" fill="#4a4a4a">Aug-21</text><rect x="9.3" y="34.75" width="65.4" height="2.3" fill="#000" opacity=".3"/><rect x="9.3" y="34.05" width="30.87" height="2.3" fill="#3f6cc0"/><rect x="40.17" y="34.05" width="34.53" height="2.3" fill="#e8731f"/><text x="7.6" y="36.10" font-size="2.8" text-anchor="end" textLength="5.8" lengthAdjust="spacingAndGlyphs" fill="#4a4a4a">Jul-21</text><text x="9.30" y="40.85" font-size="2.7" text-anchor="middle" textLength="3.6" lengthAdjust="spacingAndGlyphs" fill="#4a4a4a">92%</text><text x="17.48" y="40.85" font-size="2.7" text-anchor="middle" textLength="3.6" lengthAdjust="spacingAndGlyphs" fill="#4a4a4a">93%</text><text x="25.65" y="40.85" font-size="2.7" text-anchor="middle" textLength="3.6" lengthAdjust="spacingAndGlyphs" fill="#4a4a4a">94%</text><text x="33.83" y="40.85" font-size="2.7" text-anchor="middle" textLength="3.6" lengthAdjust="spacingAndGlyphs" fill="#4a4a4a">95%</text><text x="42.00" y="40.85" font-size="2.7" text-anchor="middle" textLength="3.6" lengthAdjust="spacingAndGlyphs" fill="#4a4a4a">96%</text><text x="50.17" y="40.85" font-size="2.7" text-anchor="middle" textLength="3.6" lengthAdjust="spacingAndGlyphs" fill="#4a4a4a">97%</text><text x="58.35" y="40.85" font-size="2.7" text-anchor="middle" textLength="3.6" lengthAdjust="spacingAndGlyphs" fill="#4a4a4a">98%</text><text x="66.53" y="40.85" font-size="2.7" text-anchor="middle" textLength="3.6" lengthAdjust="spacingAndGlyphs" fill="#4a4a4a">99%</text><text x="74.70" y="40.85" font-size="2.7" text-anchor="middle" textLength="4.6" lengthAdjust="spacingAndGlyphs" fill="#4a4a4a">100%</text><rect x="25.2" y="43.4" width="1.4" height="1.4" fill="#3f6cc0"/><text x="27" y="44.95" font-size="2.7" textLength="12" lengthAdjust="spacingAndGlyphs" fill="#4a4a4a">Crude Oil Price</text><rect x="41.3" y="43.4" width="1.4" height="1.4" fill="#e8731f"/><text x="43.1" y="44.95" font-size="2.7" textLength="13" lengthAdjust="spacingAndGlyphs" fill="#4a4a4a">Retail Gas Price</text></svg>
<div class="r" style="left:5.500px;top:114.200px;width:27px;height:27px;box-shadow:0.5px 1px 1.5px rgba(0,0,0,.25);border-radius:50%;background:#ee3b3e;z-index:5"></div>
<span class="t" style="left:12.99px;top:117.21px;font-size:18px;line-height:22px;letter-spacing:0.789px;color:#ffffff;font-weight:bold;z-index:6;">2</span>
<div class="r" style="left:0px;top:130px;width:906px;height:46px;background:#e6e6e6;"></div>
<div class="r" style="left:3px;top:140px;width:102px;height:26px;background:#fff;border:1px solid #c8c8c8;box-sizing:border-box;"></div>
<span class="t" style="left:10.14px;top:144.89px;font-size:12.5px;line-height:16.5px;letter-spacing:0.287px;color:#444;">Chart 2</span>
<svg class="r" style="left:91px;top:150px" width="8" height="5" viewBox="0 0 8 5"><path d="M0.500 0.500h7l-3.500 4z" fill="#666"/></svg>
<div class="r" style="left:119.1px;top:147.79999999999998px;width:1.7px;height:1.7px;background:#a6a6a6;"></div>
<div class="r" style="left:119.1px;top:152.1px;width:1.7px;height:1.7px;background:#a6a6a6;"></div>
<div class="r" style="left:119.1px;top:156.39999999999998px;width:1.7px;height:1.7px;background:#a6a6a6;"></div>
<div class="r" style="left:135px;top:140px;width:110px;height:26px;background:#fff;border:1px solid #c8c8c8;box-sizing:border-box;"></div>
<div class="r" style="left:248px;top:140px;width:660px;height:26px;background:#fff;border:1px solid #c8c8c8;box-sizing:border-box;"></div>
<svg class="r" style="left:140px;top:141px" width="100" height="24" viewBox="140 141 100 24" fill="none"><path d="M149 149.300l9.800 8.900M158.800 149.300l-9.800 8.900" stroke="#b2b2b2" stroke-width="1.700"/><path d="M185.300 153.800l4.300 4.300l6.900-9.300" stroke="#b8b8b8" stroke-width="2.100"/></svg>
<span class="t" style="left:221px;top:142.500px;font-size:15.500px;line-height:20px;font-style:italic;font-weight:bold;font-family:'Liberation Serif',serif;color:#555">f<span style="font-size:10.500px;letter-spacing:-0.5px">x</span></span>
<div class="r" style="left:0px;top:176px;width:906px;height:20px;background:#e6e6e6;"></div>
<div class="r" style="left:0px;top:195px;width:906px;height:1px;background:#9e9e9e;"></div>
<div class="r" style="left:0px;top:196px;width:24px;height:340px;background:#e6e6e6;"></div>
<div class="r" style="left:24px;top:196px;width:882px;height:340px;background:#ffffff;"></div>
<div class="r" style="left:23px;top:176px;width:1px;height:360px;background:#b0b0b0;"></div>
<svg class="r" style="left:8px;top:180px" width="13" height="13" viewBox="0 0 13 13"><path d="M12 1v11h-11z" fill="#b4b4b4"/></svg>
<div class="r" style="left:52px;top:176px;width:1px;height:19px;background:#b8b8b8;"></div>
<span class="t" style="left:34.53px;top:177.89px;font-size:12.5px;line-height:16.5px;letter-spacing:0.000px;color:#262626;">A</span>
<div class="r" style="left:128px;top:176px;width:1px;height:19px;background:#b8b8b8;"></div>
<span class="t" style="left:86.53px;top:177.89px;font-size:12.5px;line-height:16.5px;letter-spacing:0.000px;color:#262626;">B</span>
<div class="r" style="left:246px;top:176px;width:1px;height:19px;background:#b8b8b8;"></div>
<span class="t" style="left:183.19px;top:177.89px;font-size:12.5px;line-height:16.5px;letter-spacing:0.000px;color:#262626;">C</span>
<div class="r" style="left:381px;top:176px;width:1px;height:19px;background:#b8b8b8;"></div>
<span class="t" style="left:309.69px;top:177.89px;font-size:12.5px;line-height:16.5px;letter-spacing:-0.000px;color:#262626;">D</span>
<div class="r" style="left:426px;top:176px;width:1px;height:19px;background:#b8b8b8;"></div>
<span class="t" style="left:400.03px;top:177.89px;font-size:12.5px;line-height:16.5px;letter-spacing:-0.000px;color:#262626;">E</span>
<div class="r" style="left:490px;top:176px;width:1px;height:19px;background:#b8b8b8;"></div>
<span class="t" style="left:454.88px;top:177.89px;font-size:12.5px;line-height:16.5px;letter-spacing:-0.000px;color:#262626;">F</span>
<div class="r" style="left:554px;top:176px;width:1px;height:19px;background:#b8b8b8;"></div>
<span class="t" style="left:517.84px;top:177.89px;font-size:12.5px;line-height:16.5px;letter-spacing:0.000px;color:#262626;">G</span>
<div class="r" style="left:618px;top:176px;width:1px;height:19px;background:#b8b8b8;"></div>
<span class="t" style="left:582.19px;top:177.89px;font-size:12.5px;line-height:16.5px;letter-spacing:-0.000px;color:#262626;">H</span>
<div class="r" style="left:682px;top:176px;width:1px;height:19px;background:#b8b8b8;"></div>
<span class="t" style="left:648.96px;top:177.89px;font-size:12.5px;line-height:16.5px;letter-spacing:0.000px;color:#262626;">I</span>
<div class="r" style="left:746px;top:176px;width:1px;height:19px;background:#b8b8b8;"></div>
<span class="t" style="left:711.58px;top:177.89px;font-size:12.5px;line-height:16.5px;letter-spacing:0.000px;color:#262626;">J</span>
<div class="r" style="left:810px;top:176px;width:1px;height:19px;background:#b8b8b8;"></div>
<span class="t" style="left:774.53px;top:177.89px;font-size:12.5px;line-height:16.5px;letter-spacing:0.000px;color:#262626;">K</span>
<div class="r" style="left:874px;top:176px;width:1px;height:19px;background:#b8b8b8;"></div>
<span class="t" style="left:839.22px;top:177.89px;font-size:12.5px;line-height:16.5px;letter-spacing:-0.000px;color:#262626;">L</span>
<div class="r" style="left:938px;top:176px;width:1px;height:19px;background:#b8b8b8;"></div>
<span class="t" style="left:901.49px;top:177.89px;font-size:12.5px;line-height:16.5px;letter-spacing:-0.000px;color:#262626;">M</span>
<div class="r" style="left:0px;top:221px;width:24px;height:1px;background:#b4b4b4;"></div>
<span class="t" style="left:7.02px;top:205.09px;font-size:12.5px;line-height:16.5px;letter-spacing:-0.348px;color:#262626;">1</span>
<div class="r" style="left:0px;top:247px;width:24px;height:1px;background:#b4b4b4;"></div>
<span class="t" style="left:7.02px;top:231.09px;font-size:12.5px;line-height:16.5px;letter-spacing:-0.348px;color:#262626;">2</span>
<div class="r" style="left:0px;top:273px;width:24px;height:1px;background:#b4b4b4;"></div>
<span class="t" style="left:7.02px;top:257.09px;font-size:12.5px;line-height:16.5px;letter-spacing:-0.348px;color:#262626;">3</span>
<div class="r" style="left:0px;top:299px;width:24px;height:1px;background:#b4b4b4;"></div>
<span class="t" style="left:7.02px;top:283.09px;font-size:12.5px;line-height:16.5px;letter-spacing:-0.348px;color:#262626;">4</span>
<div class="r" style="left:0px;top:325px;width:24px;height:1px;background:#b4b4b4;"></div>
<span class="t" style="left:7.02px;top:309.09px;font-size:12.5px;line-height:16.5px;letter-spacing:-0.348px;color:#262626;">5</span>
<div class="r" style="left:0px;top:351px;width:24px;height:1px;background:#b4b4b4;"></div>
<span class="t" style="left:7.02px;top:335.09px;font-size:12.5px;line-height:16.5px;letter-spacing:-0.348px;color:#262626;">6</span>
<div class="r" style="left:0px;top:377px;width:24px;height:1px;background:#b4b4b4;"></div>
<span class="t" style="left:7.02px;top:361.09px;font-size:12.5px;line-height:16.5px;letter-spacing:-0.348px;color:#262626;">7</span>
<div class="r" style="left:0px;top:403px;width:24px;height:1px;background:#b4b4b4;"></div>
<span class="t" style="left:7.02px;top:387.09px;font-size:12.5px;line-height:16.5px;letter-spacing:-0.348px;color:#262626;">8</span>
<div class="r" style="left:0px;top:429px;width:24px;height:1px;background:#b4b4b4;"></div>
<span class="t" style="left:7.02px;top:413.09px;font-size:12.5px;line-height:16.5px;letter-spacing:-0.348px;color:#262626;">9</span>
<div class="r" style="left:0px;top:455px;width:24px;height:1px;background:#b4b4b4;"></div>
<span class="t" style="left:4.97px;top:439.09px;font-size:12.5px;line-height:16.5px;letter-spacing:-0.348px;color:#262626;">10</span>
<div class="r" style="left:0px;top:481px;width:24px;height:1px;background:#b4b4b4;"></div>
<span class="t" style="left:5.42px;top:465.09px;font-size:12.5px;line-height:16.5px;letter-spacing:-0.324px;color:#262626;">11</span>
<div class="r" style="left:0px;top:507px;width:24px;height:1px;background:#b4b4b4;"></div>
<span class="t" style="left:4.97px;top:491.09px;font-size:12.5px;line-height:16.5px;letter-spacing:-0.348px;color:#262626;">12</span>
<div class="r" style="left:0px;top:533px;width:24px;height:1px;background:#b4b4b4;"></div>
<span class="t" style="left:4.97px;top:517.09px;font-size:12.5px;line-height:16.5px;letter-spacing:-0.348px;color:#262626;">13</span>
<div class="r" style="left:52px;top:221px;width:330px;height:25.5px;background:#e2efda;"></div>
<div class="r" style="left:52px;top:246px;width:330px;height:2.6px;background:#9ab3de;"></div>
<span class="t" style="left:93.32px;top:224.93px;font-size:15.5px;line-height:19.5px;letter-spacing:-0.368px;color:#000;font-weight:bold;">100% Stacked Bar Chart with Dates</span>
<div class="r" style="left:52px;top:273px;width:77px;height:26.5px;background:#e2efda;"></div>
<div class="r" style="left:129px;top:273px;width:253px;height:26.5px;background:#ddd9c4;"></div>
<div class="r" style="left:52px;top:299.5px;width:77px;height:156px;background:#f1edf8;"></div>
<div class="r" style="left:129px;top:299.5px;width:253px;height:156px;background:#e8effa;"></div>
<div class="r" style="left:52px;top:273px;width:77px;height:1px;background:#111;"></div>
<div class="r" style="left:52px;top:273px;width:1px;height:27px;background:#111;"></div>
<div class="r" style="left:53px;top:325.15px;width:329px;height:1px;background:#111;"></div>
<div class="r" style="left:53px;top:351.15px;width:329px;height:1px;background:#111;"></div>
<div class="r" style="left:53px;top:377.15px;width:329px;height:1px;background:#111;"></div>
<div class="r" style="left:53px;top:403.15px;width:329px;height:1px;background:#111;"></div>
<div class="r" style="left:53px;top:429.15px;width:329px;height:1px;background:#111;"></div>
<div class="r" style="left:245.8px;top:275px;width:1px;height:179px;background:#111;"></div>
<div class="r" style="left:128px;top:272.1px;width:254px;height:1.6px;background:#c9303e;"></div>
<div class="r" style="left:130px;top:299.1px;width:252px;height:1.6px;background:#c9303e;"></div>
<div class="r" style="left:127.2px;top:273px;width:1.6px;height:26px;background:#c9303e;"></div>
<div class="r" style="left:381px;top:273px;width:1.6px;height:27px;background:#c9303e;"></div>
<div class="r" style="left:51px;top:298.4px;width:78px;height:1.7px;background:#8a5cc4;"></div>
<div class="r" style="left:51px;top:454.5px;width:78px;height:2.1px;background:#8a5cc4;"></div>
<div class="r" style="left:51.1px;top:299px;width:1.8px;height:156px;background:#8a5cc4;"></div>
<div class="r" style="left:128px;top:299px;width:1.8px;height:156px;background:#8a5cc4;"></div>
<div class="r" style="left:130px;top:454.5px;width:253px;height:2.1px;background:#3b64c4;"></div>
<div class="r" style="left:380.9px;top:303px;width:1.8px;height:152.5px;background:#3b64c4;"></div>
<div class="r" style="left:125.9px;top:271.0px;width:5.2px;height:5.2px;background:#c9303e;outline:0.6px solid #fff;"></div>
<div class="r" style="left:379.4px;top:271.0px;width:5.2px;height:5.2px;background:#c9303e;outline:0.6px solid #fff;"></div>
<div class="r" style="left:379.4px;top:297.09999999999997px;width:5.2px;height:5.2px;background:#c9303e;outline:0.6px solid #fff;"></div>
<div class="r" style="left:50.3px;top:296.9px;width:5.2px;height:5.2px;background:#8a5cc4;outline:0.6px solid #fff;"></div>
<div class="r" style="left:126.4px;top:296.9px;width:5.2px;height:5.2px;background:#8a5cc4;outline:0.6px solid #fff;"></div>
<div class="r" style="left:50.3px;top:452.9px;width:5.2px;height:5.2px;background:#8a5cc4;outline:0.6px solid #fff;"></div>
<div class="r" style="left:126.4px;top:452.9px;width:5.2px;height:5.2px;background:#8a5cc4;outline:0.6px solid #fff;"></div>
<div class="r" style="left:379.4px;top:452.9px;width:5.2px;height:5.2px;background:#3b64c4;outline:0.6px solid #fff;"></div>
<span class="t" style="left:72.26px;top:277.81px;font-size:14.3px;line-height:18.3px;letter-spacing:-0.490px;color:#000;font-weight:bold;">Dates</span>
<span class="t" style="left:136.42px;top:277.81px;font-size:14.3px;line-height:18.3px;letter-spacing:-0.154px;color:#000;font-weight:bold;">Crude Oil Price</span>
<span class="t" style="left:262.35px;top:277.81px;font-size:14.3px;line-height:18.3px;letter-spacing:-0.306px;color:#000;font-weight:bold;">Retail Gas Price</span>
<span class="t" style="left:73.27px;top:304.71px;font-size:13.5px;line-height:17.5px;letter-spacing:-0.461px;color:#111;">Jul-21</span>
<span class="t" style="left:168.23px;top:304.71px;font-size:13.5px;line-height:17.5px;letter-spacing:-0.548px;color:#111;">$73.03</span>
<span class="t" style="left:298.27px;top:304.71px;font-size:13.5px;line-height:17.5px;letter-spacing:-0.456px;color:#111;">$3.22</span>
<span class="t" style="left:69.00px;top:330.71px;font-size:13.5px;line-height:17.5px;letter-spacing:-0.005px;color:#111;">Aug-21</span>
<span class="t" style="left:168.23px;top:330.71px;font-size:13.5px;line-height:17.5px;letter-spacing:-0.548px;color:#111;">$68.52</span>
<span class="t" style="left:298.27px;top:330.71px;font-size:13.5px;line-height:17.5px;letter-spacing:-0.456px;color:#111;">$3.26</span>
<span class="t" style="left:70.25px;top:356.71px;font-size:13.5px;line-height:17.5px;letter-spacing:-0.505px;color:#111;">Sep-21</span>
<span class="t" style="left:168.23px;top:356.71px;font-size:13.5px;line-height:17.5px;letter-spacing:-0.548px;color:#111;">$69.38</span>
<span class="t" style="left:298.27px;top:356.71px;font-size:13.5px;line-height:17.5px;letter-spacing:-0.456px;color:#111;">$3.27</span>
<span class="t" style="left:71.42px;top:382.71px;font-size:13.5px;line-height:17.5px;letter-spacing:-0.168px;color:#111;">Oct-21</span>
<span class="t" style="left:168.23px;top:382.71px;font-size:13.5px;line-height:17.5px;letter-spacing:-0.548px;color:#111;">$77.61</span>
<span class="t" style="left:298.27px;top:382.71px;font-size:13.5px;line-height:17.5px;letter-spacing:-0.456px;color:#111;">$3.29</span>
<span class="t" style="left:69.00px;top:408.71px;font-size:13.5px;line-height:17.5px;letter-spacing:-0.003px;color:#111;">Nov-21</span>
<span class="t" style="left:168.23px;top:408.71px;font-size:13.5px;line-height:17.5px;letter-spacing:-0.548px;color:#111;">$78.47</span>
<span class="t" style="left:298.27px;top:408.71px;font-size:13.5px;line-height:17.5px;letter-spacing:-0.456px;color:#111;">$3.51</span>
<span class="t" style="left:70.25px;top:434.71px;font-size:13.5px;line-height:17.5px;letter-spacing:-0.503px;color:#111;">Dec-21</span>
<span class="t" style="left:168.23px;top:434.71px;font-size:13.5px;line-height:17.5px;letter-spacing:-0.548px;color:#111;">$68.85</span>
<span class="t" style="left:298.27px;top:434.71px;font-size:13.5px;line-height:17.5px;letter-spacing:-0.456px;color:#111;">$3.44</span>
<div class="r" style="left:417px;top:221px;width:480.70000000000005px;height:288.3px;background:#2e2e2e;"></div>
<div class="r" style="left:418px;top:222px;width:479.20000000000005px;height:286.8px;background:radial-gradient(circle farthest-corner at 50% 50%, #5a5a5a 0%, #545454 30%, #4c4c4c 52%, #434343 72%, #3a3a3a 86%, #2b2b2b 100%);border-top:1px solid #767676;border-left:1px solid #6c6c6c;box-sizing:border-box;"></div>
<span class="t" style="left:604.61px;top:234.26px;font-size:18.5px;line-height:22.5px;letter-spacing:1.223px;color:#f4f4f4;font-weight:bold;text-shadow:0 1px 2px rgba(0,0,0,.45);">Chart Title</span>
<div class="r" style="left:471.70000000000005px;top:274.5px;width:1.1px;height:174px;background:#c4c4c4;"></div>
<div class="r" style="left:522px;top:274.5px;width:1px;height:174px;background:rgba(255,255,255,.09);"></div>
<div class="r" style="left:571px;top:274.5px;width:1px;height:174px;background:rgba(255,255,255,.09);"></div>
<div class="r" style="left:621px;top:274.5px;width:1px;height:174px;background:rgba(255,255,255,.09);"></div>
<div class="r" style="left:670px;top:274.5px;width:1px;height:174px;background:rgba(255,255,255,.09);"></div>
<div class="r" style="left:720px;top:274.5px;width:1px;height:174px;background:rgba(255,255,255,.09);"></div>
<div class="r" style="left:770px;top:274.5px;width:1px;height:174px;background:rgba(255,255,255,.09);"></div>
<div class="r" style="left:819px;top:274.5px;width:1px;height:174px;background:rgba(255,255,255,.09);"></div>
<div class="r" style="left:869px;top:274.5px;width:1px;height:174px;background:rgba(255,255,255,.09);"></div>
<div class="r" style="left:468px;top:274px;width:4.5px;height:1.1px;background:#c4c4c4;"></div>
<div class="r" style="left:468px;top:303px;width:4.5px;height:1.1px;background:#c4c4c4;"></div>
<div class="r" style="left:468px;top:332px;width:4.5px;height:1.1px;background:#c4c4c4;"></div>
<div class="r" style="left:468px;top:361px;width:4.5px;height:1.1px;background:#c4c4c4;"></div>
<div class="r" style="left:468px;top:390px;width:4.5px;height:1.1px;background:#c4c4c4;"></div>
<div class="r" style="left:468px;top:419px;width:4.5px;height:1.1px;background:#c4c4c4;"></div>
<div class="r" style="left:468px;top:448px;width:4.5px;height:1.1px;background:#c4c4c4;"></div>
<div class="r" style="left:472.6px;top:285.5px;width:397.6px;height:11px;background:rgba(0,0,0,.38);filter:blur(1.600px);"></div>
<div class="r" style="left:472.6px;top:283.0px;width:160.70232px;height:11px;background:linear-gradient(#4a78cf,#3d6ac2);"></div>
<div class="r" style="left:633.30232px;top:283.0px;width:235.89768000000004px;height:11px;background:linear-gradient(#f28535,#e87424);"></div>
<span class="t" style="left:427.03px;top:280.98px;font-size:11.3px;line-height:15.3px;letter-spacing:-0.538px;color:#f0f0f0;">Dec-21</span>
<div class="r" style="left:472.6px;top:314.5px;width:397.6px;height:11px;background:rgba(0,0,0,.38);filter:blur(1.600px);"></div>
<div class="r" style="left:472.6px;top:312.0px;width:184.33968000000004px;height:11px;background:linear-gradient(#4a78cf,#3d6ac2);"></div>
<div class="r" style="left:656.9396800000001px;top:312.0px;width:212.26031999999998px;height:11px;background:linear-gradient(#f28535,#e87424);"></div>
<span class="t" style="left:425.66px;top:309.98px;font-size:11.3px;line-height:15.3px;letter-spacing:-0.288px;color:#f0f0f0;">Nov-21</span>
<div class="r" style="left:472.6px;top:343.5px;width:397.6px;height:11px;background:rgba(0,0,0,.38);filter:blur(1.600px);"></div>
<div class="r" style="left:472.6px;top:341.0px;width:195.00822000000005px;height:11px;background:linear-gradient(#4a78cf,#3d6ac2);"></div>
<div class="r" style="left:667.6082200000001px;top:341.0px;width:201.59177999999997px;height:11px;background:linear-gradient(#f28535,#e87424);"></div>
<span class="t" style="left:427.97px;top:338.98px;font-size:11.3px;line-height:15.3px;letter-spacing:-0.252px;color:#f0f0f0;">Oct-21</span>
<div class="r" style="left:472.6px;top:372.5px;width:397.6px;height:11px;background:rgba(0,0,0,.38);filter:blur(1.600px);"></div>
<div class="r" style="left:472.6px;top:370.0px;width:173.47284000000002px;height:11px;background:linear-gradient(#4a78cf,#3d6ac2);"></div>
<div class="r" style="left:646.07284px;top:370.0px;width:223.12716px;height:11px;background:linear-gradient(#f28535,#e87424);"></div>
<span class="t" style="left:427.67px;top:367.98px;font-size:11.3px;line-height:15.3px;letter-spacing:-0.656px;color:#f0f0f0;">Sep-21</span>
<div class="r" style="left:472.6px;top:401.5px;width:397.6px;height:11px;background:rgba(0,0,0,.38);filter:blur(1.600px);"></div>
<div class="r" style="left:472.6px;top:399.0px;width:171.45018000000005px;height:11px;background:linear-gradient(#4a78cf,#3d6ac2);"></div>
<div class="r" style="left:644.0501800000001px;top:399.0px;width:225.14981999999998px;height:11px;background:linear-gradient(#f28535,#e87424);"></div>
<span class="t" style="left:425.84px;top:396.98px;font-size:11.3px;line-height:15.3px;letter-spacing:-0.323px;color:#f0f0f0;">Aug-21</span>
<div class="r" style="left:472.6px;top:430.5px;width:397.6px;height:11px;background:rgba(0,0,0,.38);filter:blur(1.600px);"></div>
<div class="r" style="left:472.6px;top:428.0px;width:187.23486000000003px;height:11px;background:linear-gradient(#4a78cf,#3d6ac2);"></div>
<div class="r" style="left:659.83486px;top:428.0px;width:209.36514px;height:11px;background:linear-gradient(#f28535,#e87424);"></div>
<span class="t" style="left:431.81px;top:425.98px;font-size:11.3px;line-height:15.3px;letter-spacing:-0.379px;color:#f0f0f0;">Jul-21</span>
<span class="t" style="left:461.33px;top:455.94px;font-size:11.8px;line-height:15.8px;letter-spacing:-1.139px;color:#e6e6e6;">92%</span>
<span class="t" style="left:510.91px;top:455.94px;font-size:11.8px;line-height:15.8px;letter-spacing:-1.139px;color:#e6e6e6;">93%</span>
<span class="t" style="left:560.48px;top:455.94px;font-size:11.8px;line-height:15.8px;letter-spacing:-1.139px;color:#e6e6e6;">94%</span>
<span class="t" style="left:610.06px;top:455.94px;font-size:11.8px;line-height:15.8px;letter-spacing:-1.139px;color:#e6e6e6;">95%</span>
<span class="t" style="left:659.63px;top:455.94px;font-size:11.8px;line-height:15.8px;letter-spacing:-1.139px;color:#e6e6e6;">96%</span>
<span class="t" style="left:709.21px;top:455.94px;font-size:11.8px;line-height:15.8px;letter-spacing:-1.139px;color:#e6e6e6;">97%</span>
<span class="t" style="left:758.78px;top:455.94px;font-size:11.8px;line-height:15.8px;letter-spacing:-1.139px;color:#e6e6e6;">98%</span>
<span class="t" style="left:808.36px;top:455.94px;font-size:11.8px;line-height:15.8px;letter-spacing:-1.139px;color:#e6e6e6;">99%</span>
<span class="t" style="left:855.15px;top:455.94px;font-size:11.8px;line-height:15.8px;letter-spacing:-1.095px;color:#e6e6e6;">100%</span>
<div class="r" style="left:568px;top:486.9px;width:7px;height:7px;background:#4472c4;"></div>
<span class="t" style="left:577.80px;top:482.28px;font-size:11.5px;line-height:15.5px;letter-spacing:-0.398px;color:#e6e6e6;">Crude Oil Price</span>
<div class="r" style="left:665px;top:486.9px;width:7px;height:7px;background:#ed7d31;"></div>
<span class="t" style="left:674.73px;top:482.28px;font-size:11.5px;line-height:15.5px;letter-spacing:-0.536px;color:#e6e6e6;">Retail Gas Price</span>
<div class="r" style="left:418px;top:485.9px;width:106px;height:23.4px;background:rgba(255,255,255,.27);"></div>
<svg class="r" style="left:381px;top:485px;opacity:.6" width="30" height="32" viewBox="0 0 30 32"><path d="M15 1L28 8.500V23.500L15 31L2 23.500V8.500Z" fill="#cdd5ec"/><path d="M15 1L28 8.500L15 16L2 8.500Z" fill="#dde1ea"/><path d="M15 16V31L2 23.500V8.500Z" fill="#b9c5ee"/><path d="M10 12l5-3l5 3v7l-5 3l-5-3z" fill="#eceff8"/><path d="M15 9l5 3v7l-5-3z" fill="#d5dbee"/></svg>
<span class="t" style="left:415.08px;top:483.61px;font-size:22.5px;line-height:26.5px;letter-spacing:-0.843px;color:rgba(60,80,142,.74);font-weight:bold;">exceldemy</span>
<span class="t" style="left:425.65px;top:505.88px;font-size:7px;line-height:11px;letter-spacing:1.306px;color:rgba(196,200,214,.9);font-weight:bold;">EXCEL · DATA · BI</span>
<div class="r" style="left:412.90000000000003px;top:216.9px;width:10.800px;height:10.800px;border-radius:50%;background:#fff;border:1.900px solid #5e5e5e;box-sizing:border-box;"></div>
<div class="r" style="left:652.5px;top:216.9px;width:10.800px;height:10.800px;border-radius:50%;background:#fff;border:1.900px solid #5e5e5e;box-sizing:border-box;"></div>
<div class="r" style="left:892.1px;top:216.9px;width:10.800px;height:10.800px;border-radius:50%;background:#fff;border:1.900px solid #5e5e5e;box-sizing:border-box;"></div>
<div class="r" style="left:412.90000000000003px;top:360.40000000000003px;width:10.800px;height:10.800px;border-radius:50%;background:#fff;border:1.900px solid #5e5e5e;box-sizing:border-box;"></div>
<div class="r" style="left:892.1px;top:360.40000000000003px;width:10.800px;height:10.800px;border-radius:50%;background:#fff;border:1.900px solid #5e5e5e;box-sizing:border-box;"></div>
<div class="r" style="left:412.90000000000003px;top:503.90000000000003px;width:10.800px;height:10.800px;border-radius:50%;background:#fff;border:1.900px solid #5e5e5e;box-sizing:border-box;"></div>
<div class="r" style="left:652.5px;top:503.90000000000003px;width:10.800px;height:10.800px;border-radius:50%;background:#fff;border:1.900px solid #5e5e5e;box-sizing:border-box;"></div>
<div class="r" style="left:892.1px;top:503.90000000000003px;width:10.800px;height:10.800px;border-radius:50%;background:#fff;border:1.900px solid #5e5e5e;box-sizing:border-box;"></div>
</body></html>
